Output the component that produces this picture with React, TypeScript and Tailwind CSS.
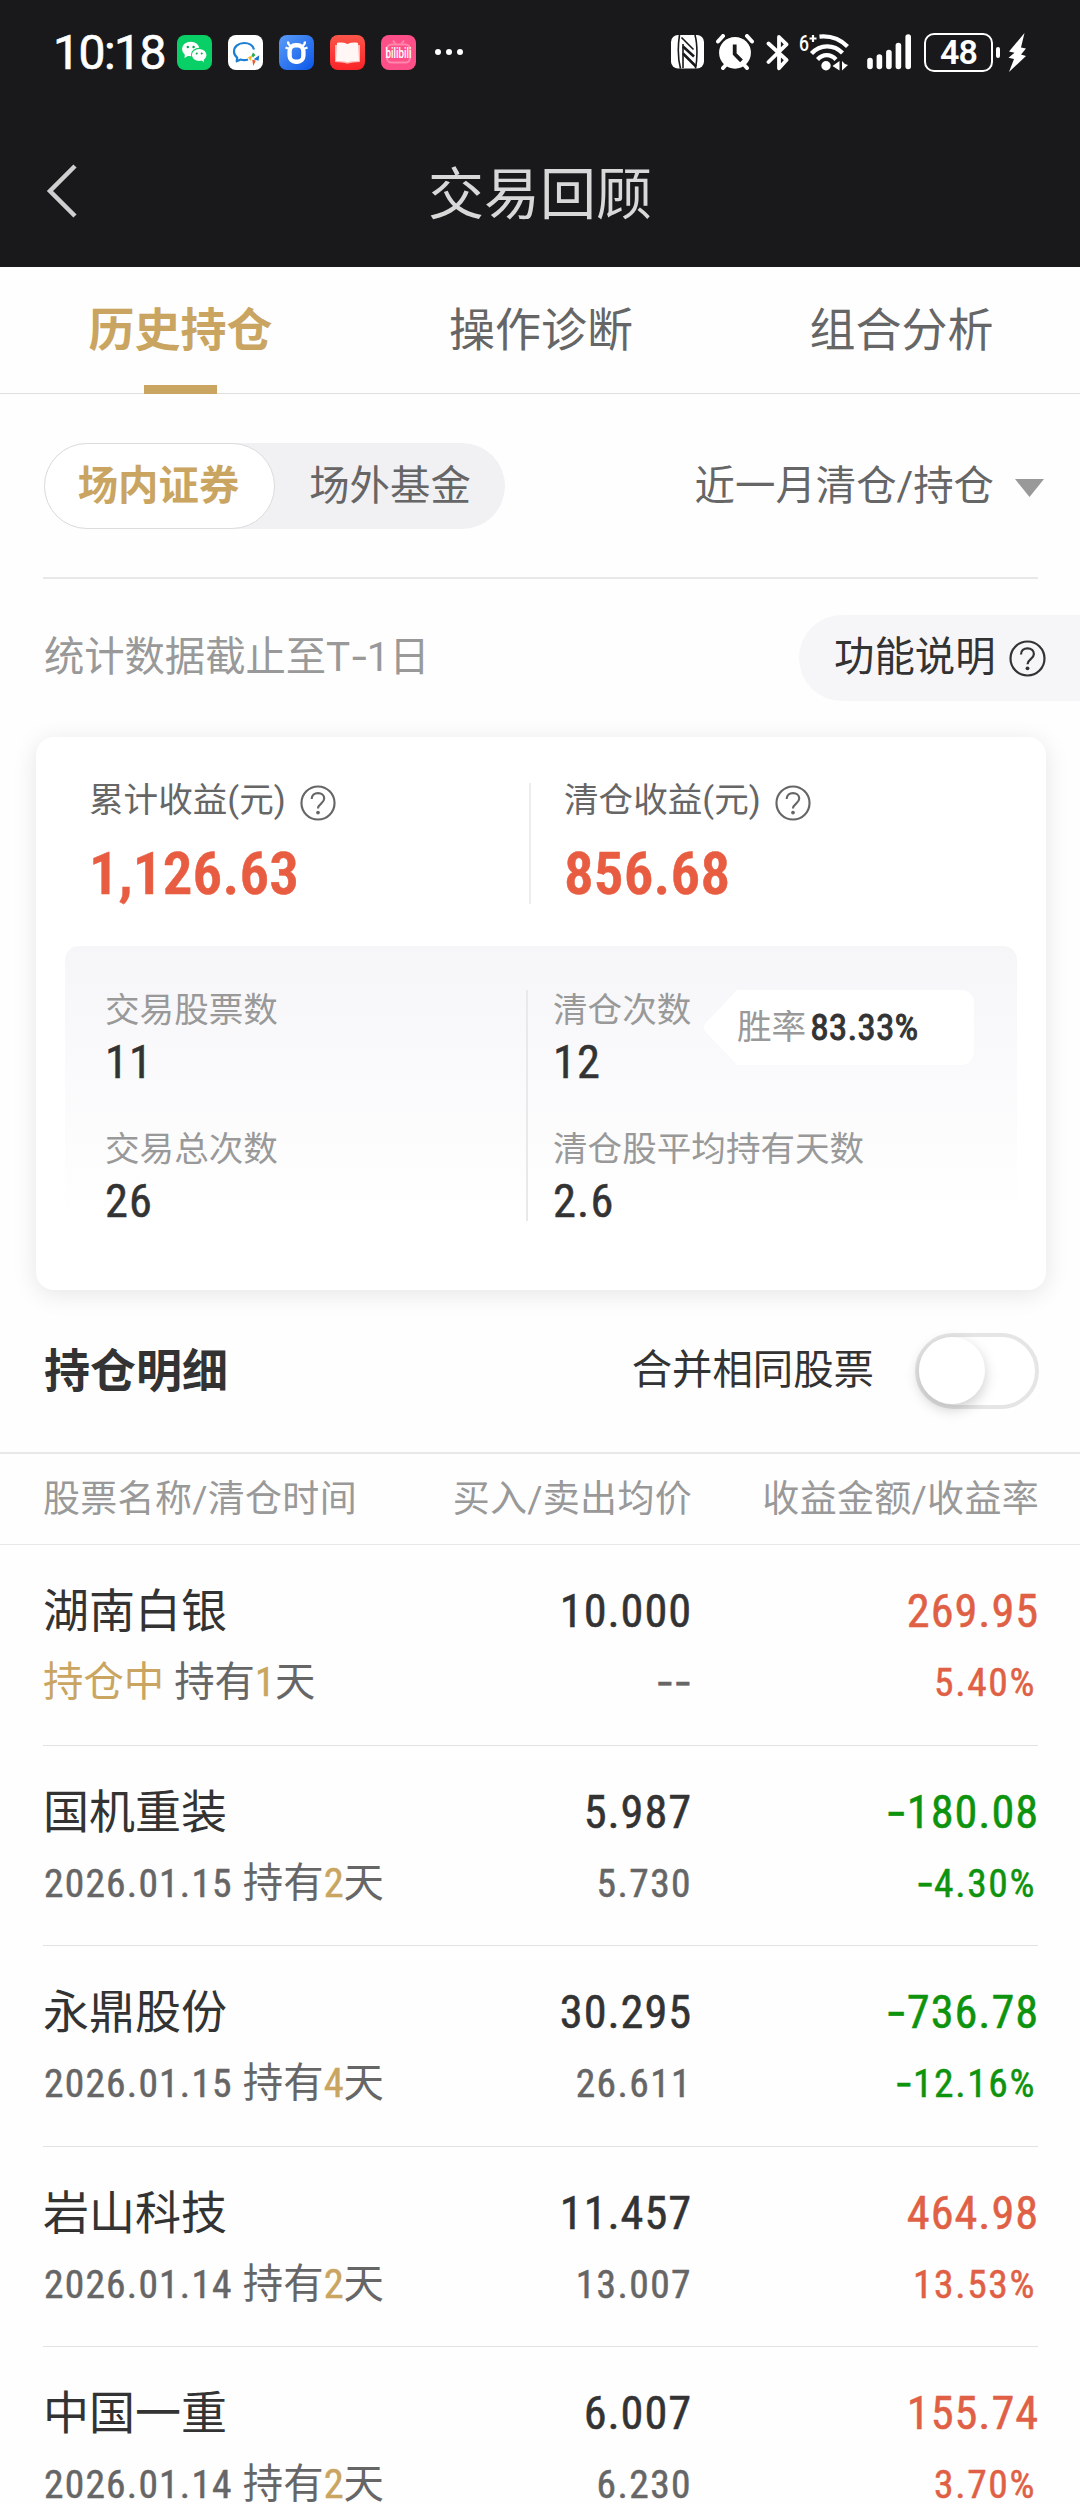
import type { ReactNode } from "react";

const NUM = "[font-stretch:75%] [-webkit-text-stroke:0.5px]";

type Holding = {
  name: string;
  date: string | null;
  days: number;
  buy: string;
  sell: string;
  profit: string;
  rate: string;
};

const holdings: Holding[] = [
  { name: "湖南白银", date: null, days: 1, buy: "10.000", sell: "--", profit: "269.95", rate: "5.40%" },
  { name: "国机重装", date: "2026.01.15", days: 2, buy: "5.987", sell: "5.730", profit: "-180.08", rate: "-4.30%" },
  { name: "永鼎股份", date: "2026.01.15", days: 4, buy: "30.295", sell: "26.611", profit: "-736.78", rate: "-12.16%" },
  { name: "岩山科技", date: "2026.01.14", days: 2, buy: "11.457", sell: "13.007", profit: "464.98", rate: "13.53%" },
  { name: "中国一重", date: "2026.01.14", days: 2, buy: "6.007", sell: "6.230", profit: "155.74", rate: "3.70%" },
];

/** Digits in the condensed face, with wide hyphens. */
function Num({ children }: { children: string }) {
  const dashes = children.match(/^-+/)?.[0] ?? "";
  return (
    <span className={NUM}>
      {dashes && <span className="font-['Inter'] leading-none tracking-normal">{dashes}</span>}
      {children.slice(dashes.length)}
    </span>
  );
}

function Help({ className, size = 37, sw = 2.2 }: { className?: string; size?: number; sw?: number }) {
  return (
    <svg className={className} width={size} height={size} viewBox="0 0 37 37" fill="none" stroke="currentColor" strokeWidth={sw}>
      <circle cx="18.5" cy="18.5" r="17" />
      <path d="M12 14.5c0-4 2.900-6.200 6.500-6.200s6.400 2.200 6.400 5.700c0 5-6.400 5.200-6.400 10.200" />
      <circle cx="18.500" cy="28.300" r="1.900" fill="currentColor" stroke="none" />
    </svg>
  );
}

function AppIcons() {
  return (
    <div className="ml-[13px] flex items-center gap-[16px]">
      <svg width="35" height="35" viewBox="0 0 35 35">
        <rect width="35" height="35" rx="8" fill="#08cf66" />
        <path d="M8 17l-.5 6 5-3z" fill="#fff" />
        <ellipse cx="13.700" cy="14" rx="8.700" ry="7.300" fill="#fff" />
        <circle cx="10.800" cy="12" r="1.200" fill="#08a552" />
        <circle cx="16.600" cy="12" r="1.200" fill="#08a552" />
        <ellipse cx="22.200" cy="19.800" rx="8.200" ry="7" fill="#08cf66" />
        <ellipse cx="22.200" cy="20" rx="7.300" ry="6.100" fill="#fff" />
        <path d="M24 24l2.500 3.500.5-4.500z" fill="#fff" />
        <circle cx="19.700" cy="18.400" r="1" fill="#08a552" />
        <circle cx="24.700" cy="18.400" r="1" fill="#08a552" />
      </svg>
      <svg width="35" height="35" viewBox="0 0 35 35">
        <rect width="35" height="35" rx="8" fill="#fff" />
        <path d="M26 14.500C25 10.500 21 8 16.200 8 10.500 8 6 11.700 6 16.500c0 2.600 1.300 4.700 3.200 6.200L8.700 26.300l4-1.800c2.300.7 5 .7 7.300 0" fill="none" stroke="#1d7fd2" strokeWidth="2.200" strokeLinejoin="round" />
        <path d="M25 17.500l2.500 2.500-2.500 2.500-1.500-2z" fill="#2fa84f" />
        <path d="M30.500 21.500l-.5 3.500-3-1z" fill="#1673d0" stroke="#1673d0" strokeWidth="1.200" />
        <path d="M25 25.500l2 .5-1.500 3z" fill="#ea5a2a" stroke="#ea5a2a" strokeWidth="1.200" />
        <path d="M20.500 22.500l3-1.200-1 4z" fill="#f8b62a" stroke="#f8b62a" strokeWidth="1" />
      </svg>
      <svg width="35" height="35" viewBox="0 0 35 35">
        <defs>
          <linearGradient id="ox" x1="0" y1="0" x2="1" y2="1">
            <stop offset="0" stopColor="#5b9cf8" />
            <stop offset="1" stopColor="#0a57e8" />
          </linearGradient>
        </defs>
        <rect width="35" height="35" rx="8" fill="url(#ox)" />
        <rect x="10.600" y="10.200" width="13.800" height="16.500" rx="6" fill="none" stroke="#fff" strokeWidth="4.400" />
        <path d="M9 6.500c0 2.200 1 3.800 3 4.500M26 6.500c0 2.200-1 3.800-3 4.500M6.500 12.500l4 1.500M28.500 12.500l-4 1.500" stroke="#fff" strokeWidth="2.300" fill="none" />
      </svg>
      <svg width="35" height="35" viewBox="0 0 35 35">
        <defs>
          <linearGradient id="bk" x1="0" y1="0" x2="0" y2="1">
            <stop offset="0" stopColor="#fb5549" />
            <stop offset="1" stopColor="#fb2328" />
          </linearGradient>
        </defs>
        <rect width="35" height="35" rx="8" fill="url(#bk)" />
        <path d="M5 10h25v17c-4.500.2-9 .4-12.500 1.800C14 27.400 9.500 27.200 5 27z" fill="#ffb3ad" />
        <path d="M7 8c3.500-.8 7-.5 10.500 1C21 7.500 24.500 7.200 28 8l1 18c-4 .2-8 .2-11.500 1.200C14 26.200 10 26.200 6 26z" fill="#fff6f5" />
      </svg>
      <svg className="overflow-visible" width="35" height="35" viewBox="0 0 35 35">
        <rect width="35" height="35" rx="8" fill="#ff4f88" />
        <rect x="6" y="9.500" width="23" height="18" rx="4.500" fill="none" stroke="#ff86ac" strokeWidth="2" />
        <path d="M12 5.500l3 4M23 5.500l-3 4" stroke="#ff86ac" strokeWidth="2" />
        <text x="4.500" y="23" textLength="26" lengthAdjust="spacingAndGlyphs" fontFamily="Roboto, sans-serif" fontSize="14" fontWeight="500" fill="#fff">bilibili</text>
      </svg>
      <div className="ml-[3px] flex gap-[5px]">
        <i className="size-[6px] rounded-full bg-white" />
        <i className="size-[6px] rounded-full bg-white" />
        <i className="size-[6px] rounded-full bg-white" />
      </div>
    </div>
  );
}

function SystemIcons() {
  return (
    <div className="mr-[54px] ml-auto flex items-center text-white">
      <svg width="33" height="34" viewBox="0 0 33 34">
        <rect width="33" height="33.500" rx="7" fill="#fff" />
        <path d="M8.500 0C7 10 7 24 9.500 33.500M24 0C26.500 9 26.500 24 24.500 33.500" stroke="#19191b" strokeWidth="1.600" fill="none" />
        <path d="M10.500 2.500L22.500 14.500M12 9V33" stroke="#19191b" strokeWidth="1.600" fill="none" />
        <path d="M12 11.500L23 21.500M12 18.500L25 31.500" stroke="#19191b" strokeWidth="2.600" fill="none" />
      </svg>
      <svg className="ml-[12px]" width="38" height="36" viewBox="0 0 38 36">
        <path d="M2 7.500L7 2M36 7.500L31 2M7 34l5-5.500M31 34l-5-5.500" stroke="#fff" strokeWidth="4" strokeLinecap="round" />
        <circle cx="19" cy="18.800" r="15.900" fill="#fff" />
        <path d="M18.700 10.500v9.500l6.800 6.800" stroke="#19191b" strokeWidth="3.800" fill="none" />
      </svg>
      <svg className="ml-[12px]" width="24" height="37" viewBox="0 0 24 37" fill="none" stroke="#fff" strokeWidth="3.800" strokeLinejoin="round" strokeLinecap="round">
        <path d="M2.500 9.500L20.500 26 13 34.300V3L20.500 10.300 2.500 28" />
      </svg>
      <svg className="ml-[9px] overflow-visible" width="51" height="39" viewBox="0 0 51 39">
        <text x="0" y="17.500" fontFamily="Roboto, sans-serif" fontSize="22" fontWeight="500" fill="#fff" textLength="10" lengthAdjust="spacingAndGlyphs">6</text>
        <path d="M10.500 5.500h7M14 2v7" stroke="#fff" strokeWidth="2.200" />
        <g fill="none" stroke="#fff" strokeWidth="4.200">
          <path d="M20.500 3.600C32 2.500 42 7 48.500 13.500" />
          <path d="M12.500 20.500C21 11 35 11 43.500 20" />
          <path d="M18.500 26.500c5.500-5.800 13-5.800 18.500 0" />
        </g>
        <circle cx="27" cy="32.800" r="4.700" fill="#fff" />
        <path d="M40.500 28v9.500l-7-4.500zM43 28v9.500l6-5.500-3-1z" fill="#fff" />
      </svg>
      <svg className="ml-[17px]" width="45" height="36" viewBox="0 0 45 36" stroke="#fff" strokeWidth="5.600" strokeLinecap="round">
        <path d="M3 26.500v6M12.400 23v9.500M21.900 18.500v14M31.400 11.500v21M41.200 3v29.500" />
      </svg>
      <div className="ml-[12px] flex h-[39px] w-[69px] items-center justify-center rounded-[10px] border-[2.500px] border-white font-['Roboto'] text-[34px] leading-none font-semibold tracking-[-1px]">48</div>
      <i className="ml-[3px] h-[11px] w-[4px] rounded-full bg-white" />
      <svg className="ml-[8px]" width="18" height="39" viewBox="0 0 18 39">
        <path d="M16.500 0L1 18.500l5.500 1.200L.5 24.800l5.500 1.200L1 39l17-16-5-1.500 5-6-5-1z" fill="#fff" />
      </svg>
    </div>
  );
}

function Metric({ label, value }: { label: string; value: string }) {
  return (
    <div>
      <div className="flex h-[34px] items-center text-[34.600px] leading-none text-[#666]">
        <span>{label}</span>
        <Help className="relative top-[3px] ml-[14px]" size={36} />
      </div>
      <div className="mt-[27px] h-[60px] text-[59px] leading-[60px] font-semibold tracking-[0.200px] text-[#e85d41]">
        <Num>{value}</Num>
      </div>
    </div>
  );
}

function Stat({ label, value }: { label: string; value: string }) {
  return (
    <div className="h-[92px]">
      <div className="h-[40px] text-[34.600px] leading-[40px] text-[#999]">{label}</div>
      <div className="mt-[12px] h-[40px] text-[46.400px] leading-[40px] tracking-[1.200px] text-[#333]">
        <Num>{value}</Num>
      </div>
    </div>
  );
}

function Gold({ children }: { children: ReactNode }) {
  return <span className="text-[#c9a561]">{children}</span>;
}

function Row({ h, last }: { h: Holding; last: boolean }) {
  const tone = h.profit.startsWith("-") ? "text-[#0e930e]" : "text-[#e06045]";
  return (
    <div className={`mr-[42px] ml-[43px] grid h-[200.500px] shrink-0 grid-cols-[382px_267px_347px] pt-[41px] whitespace-nowrap ${last ? "" : "border-b border-[#e2e2e2]"}`}>
      <div>
        <div className="h-[50px] text-[46px] leading-[50px] text-[#333]">{h.name}</div>
        <div className="mt-[22px] flex h-[50px] text-[40.400px] leading-[50px] text-[#666]">
          {h.date ? (
            <span className="ml-px text-[39.500px] tracking-[1.200px]"><Num>{h.date}</Num></span>
          ) : (
            <Gold>持仓中</Gold>
          )}
          <span className="ml-[10px]">持有</span>
          <Gold><span className={NUM}>{h.days}</span></Gold>
          <span>天</span>
        </div>
      </div>
      <div className="text-right">
        <div className="h-[50px] text-[46.400px] leading-[50px] tracking-[0.900px] text-[#333]"><Num>{h.buy}</Num></div>
        <div className="mt-[22px] h-[50px] text-[39.500px] leading-[50px] tracking-[1.400px] text-[#666]"><Num>{h.sell}</Num></div>
      </div>
      <div className={`text-right ${tone}`}>
        <div className="h-[50px] text-[46.400px] leading-[50px] tracking-[0.900px]"><Num>{h.profit}</Num></div>
        <div className="mt-[22px] h-[50px] pr-[3px] text-[39.500px] leading-[50px] tracking-[1.600px]"><Num>{h.rate}</Num></div>
      </div>
    </div>
  );
}

export default function App() {
  return (
    <div className="flex h-[2504px] w-[1080px] flex-col overflow-hidden bg-[#fefefe] font-[Roboto,'Noto_Sans_CJK_SC',sans-serif] text-[#333]">
      <header className="h-[267px] shrink-0 bg-[#19191b]">
        <div className="flex h-[104px] items-center pl-[53px]">
          <div className="w-[111px] pt-[2px] text-[48px] leading-none tracking-[-1.500px] whitespace-nowrap text-white [-webkit-text-stroke:0.7px]">10:18</div>
          <AppIcons />
          <SystemIcons />
        </div>
        <div className="relative flex h-[163px] items-center justify-center pt-[18px] text-[56px] leading-none text-[#d8d8d8]">
          <svg className="absolute top-[60px] left-[46px]" width="32" height="54" viewBox="0 0 32 54" fill="none" stroke="#cfcfcf" strokeWidth="4.500">
            <path d="M29 2L4 27l25 25" />
          </svg>
          交易回顾
        </div>
      </header>

      <nav className="grid h-[127px] shrink-0 grid-cols-3 border-b border-[#e0e0e0] text-[46px] leading-none text-[#666]">
        <div className="relative flex items-center justify-center pl-px font-bold text-[#c9a561]">
          历史持仓
          <i className="absolute -bottom-px left-[144px] h-[9px] w-[73px] bg-[#c9a561]" />
        </div>
        <div className="flex items-center justify-center pl-[2px]">操作诊断</div>
        <div className="flex items-center justify-center pl-[3px]">组合分析</div>
      </nav>

      <div className="mr-[42px] ml-[43px] flex h-[185px] shrink-0 items-center justify-between border-b-2 border-[#e8e8e8] text-[40.400px] leading-none text-[#666]">
        <div className="ml-px flex h-[86px] w-[461px] rounded-full bg-[#f1f1f4]">
          <div className="flex w-[231px] items-center justify-center rounded-full border border-[#dcdcdc] bg-white pt-[3px] pr-[2px] font-bold text-[#c9a561]">场内证券</div>
          <div className="flex flex-1 items-center justify-center pt-[3px]">场外基金</div>
        </div>
        <div className="-mr-[6px] flex items-center pt-[4px]">
          近一月清仓/持仓
          <svg className="ml-[21px]" width="29" height="18" viewBox="0 0 29 18"><path d="M0 0h29L14.500 18z" fill="#999" /></svg>
        </div>
      </div>

      <div className="flex h-[158px] shrink-0 justify-between pt-[36px] text-[40.400px]">
        <div className="pl-[44px] leading-[86px] tracking-[-0.100px] text-[#999]">统计数据截止至T<span className="font-['Inter'] leading-none tracking-[-2px]">-</span>1日</div>
        <div className="flex h-[86px] w-[281px] items-center rounded-l-full bg-[#f6f6f9] pl-[35px] leading-none">
          功能说明
          <Help className="ml-[13px]" />
        </div>
      </div>

      <section className="mx-[36px] h-[553px] w-[1010px] shrink-0 rounded-[18px] bg-white pt-[46px] shadow-[0_4px_24px_rgba(0,0,0,0.1)]">
        <div className="flex h-[121px]">
          <div className="w-[493px] pl-[53px]"><Metric label="累计收益(元)" value="1,126.63" /></div>
          <div className="border-l-2 border-[#ededed] pl-[33px]"><Metric label="清仓收益(元)" value="856.68" /></div>
        </div>
        <div className="mx-[29px] mt-[42px] flex h-[280px] rounded-t-[14px] bg-linear-to-b from-[#f6f6f9] to-white pt-[44px]">
          <div className="flex h-[231px] w-[461px] flex-col gap-[47px] pl-[40px]">
            <Stat label="交易股票数" value="11" />
            <Stat label="交易总次数" value="26" />
          </div>
          <div className="relative flex h-[231px] flex-col gap-[47px] border-l-2 border-[#e9e9eb] pl-[25px]">
            <Stat label="清仓次数" value="12" />
            <Stat label="清仓股平均持有天数" value="2.6" />
            <div className="absolute top-0 left-[175px] flex">
              <svg width="34" height="75" viewBox="0 0 34 75"><path d="M34 0v75L2 41q-3-3.500 0-7z" fill="#fff" /></svg>
              <div className="flex h-[75px] w-[237px] items-center rounded-r-[13px] bg-white text-[34.600px] leading-none text-[#999]">
                胜率
                <span className="ml-[4px] text-[37.500px] tracking-[0.100px] text-[#333] [-webkit-text-stroke:0.9px] [font-stretch:75%]">83.33%</span>
              </div>
            </div>
          </div>
        </div>
      </section>

      <div className="flex h-[164px] shrink-0 items-center border-b-2 border-[#e8e8e8] pr-[41px] pl-[44px] leading-none">
        <h2 className="-mt-px text-[46px] font-bold">持仓明细</h2>
        <span className="ml-auto pt-px text-[40.400px]">合并相同股票</span>
        <div className="ml-[41px] h-[76px] w-[124px] rounded-full border-4 border-[#e5e5e5] bg-white">
          <div className="h-[67px] w-[66px] rounded-full bg-white shadow-[0_5px_14px_rgba(0,0,0,0.2)]" />
        </div>
      </div>

      <div className="grid h-[91px] shrink-0 grid-cols-[382px_267px_347px] items-center border-b border-[#e8e8e8] px-[43px] text-[37px] leading-none tracking-[0.300px] whitespace-nowrap text-[#999]">
        <span>股票名称/清仓时间</span>
        <span className="text-right">买入/卖出均价</span>
        <span className="text-right">收益金额/收益率</span>
      </div>

      {holdings.map((h, i) => (
        <Row key={h.name} h={h} last={i === holdings.length - 1} />
      ))}
    </div>
  );
}
